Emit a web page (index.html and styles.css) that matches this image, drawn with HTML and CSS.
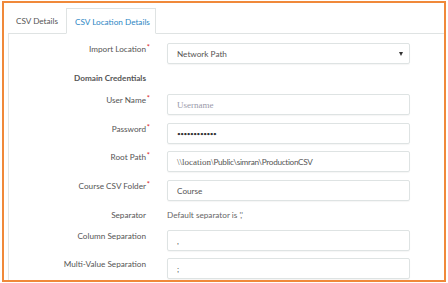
FILE: index.html
```html
<!DOCTYPE html>
<html>
<head>
<meta charset="utf-8">
<link rel="stylesheet" href="styles.css">
</head>
<body>
<div class="frame">
  <div class="tabs">
    <div class="tab">CSV Details</div>
    <div class="tab active">CSV Location Details</div>
    <div class="tab-fill"></div>
  </div>
  <div class="panel">
    <div class="row r-first">
      <div class="label">Import Location<span class="req">*</span></div>
      <div class="field select"><span>Network Path</span><span class="caret"></span></div>
    </div>
    <div class="row r-head">
      <div class="heading">Domain Credentials</div>
    </div>
    <div class="row r-g8">
      <div class="label">User Name<span class="req">*</span></div>
      <div class="field"><span class="placeholder">Username</span></div>
    </div>
    <div class="row r-g8">
      <div class="label">Password<span class="req">*</span></div>
      <div class="field"><span class="dots">••••••••••••</span></div>
    </div>
    <div class="row r-g7">
      <div class="label">Root Path<span class="req">*</span></div>
      <div class="field"><span class="serif">\\location\</span><span class="path">Public\simran\ProductionCSV</span></div>
    </div>
    <div class="row r-g8">
      <div class="label">Course CSV Folder<span class="req">*</span></div>
      <div class="field"><span>Course</span></div>
    </div>
    <div class="row r-sep">
      <div class="label">Separator</div>
      <div class="note">Default separator is ','</div>
    </div>
    <div class="row r-g8">
      <div class="label">Column Separation</div>
      <div class="field"><span>,</span></div>
    </div>
    <div class="row r-g7">
      <div class="label">Multi-Value Separation</div>
      <div class="field"><span>;</span></div>
    </div>
  </div>
</div>
</body>
</html>
```

FILE: styles.css
```css
html, body {
  margin: 0;
  padding: 0;
  background: #ffffff;
}
body {
  font-family: Lato, "Open Sans", sans-serif;
  font-size: 8.2px;
  color: #555555;
}
.frame {
  margin: 1px 0 0 2px;
  width: 440px;
  height: 277px;
  border: 2px solid #f0893a;
  display: flex;
  flex-direction: column;
  overflow: hidden;
}
.tabs {
  display: flex;
  padding: 5px 0 0 4px;
  height: 26px;
}
.tab {
  width: 58px;
  box-sizing: border-box;
  padding: 1px 0 0 8px;
  line-height: 25px;
  border-bottom: 1px solid #dfe3e3;
  color: #555;
  white-space: nowrap;
}
.tab.active {
  width: 90px;
  color: #2e87c4;
  border: 1px solid #dfe3e3;
  border-bottom: 1px solid transparent;
  padding: 1px 0 0 8px;
  line-height: 24px;
}
.tab-fill {
  flex: 1;
  border-bottom: 1px solid #dfe3e3;
}
.panel {
  flex: 1;
  margin-left: 4px;
  border-left: 1px solid #e3e6e6;
  padding-top: 9px;
}
.row {
  display: flex;
  align-items: flex-start;
}
.r-head { margin-top: 6px; height: 16px; align-items: center; }
.r-g8 { margin-top: 8px; }
.r-g7 { margin-top: 7px; }
.r-sep { margin-top: 7px; height: 14px; align-items: center; }
.label {
  position: relative;
  width: 137px;
  text-align: right;
  line-height: 13px;
  color: #555;
  white-space: nowrap;
}
.req {
  position: absolute;
  right: -4px;
  top: -2px;
  color: #d9262e;
  font-size: 7.5px;
}
.heading {
  width: 137px;
  text-align: right;
  font-weight: 700;
  color: #555;
}
.field {
  margin-left: 21px;
  height: 19px;
  border: 1px solid #dee3e3;
  border-radius: 2px;
  box-shadow: 0 1px 1px rgba(0,0,0,0.04);
  display: flex;
  align-items: center;
  padding-left: 9px;
  box-sizing: content-box;
  color: #555;
  white-space: nowrap;
  width: 232px;
}
.select {
  justify-content: space-between;
}
.caret {
  width: 0;
  height: 0;
  border-left: 2.5px solid transparent;
  border-right: 2.5px solid transparent;
  border-top: 4px solid #333;
  margin-right: 6px;
}
.placeholder {
  font-family: "Liberation Serif", serif;
  color: #9a9aaa;
  font-size: 9px;
}
.serif {
  font-family: "Liberation Serif", serif;
  font-size: 9px;
}
.path {
  letter-spacing: -0.3px;
}
.dots {
  font-size: 6.5px;
  letter-spacing: -0.5px;
  color: #333;
}
.note {
  margin-left: 21px;
  color: #666;
}
```
